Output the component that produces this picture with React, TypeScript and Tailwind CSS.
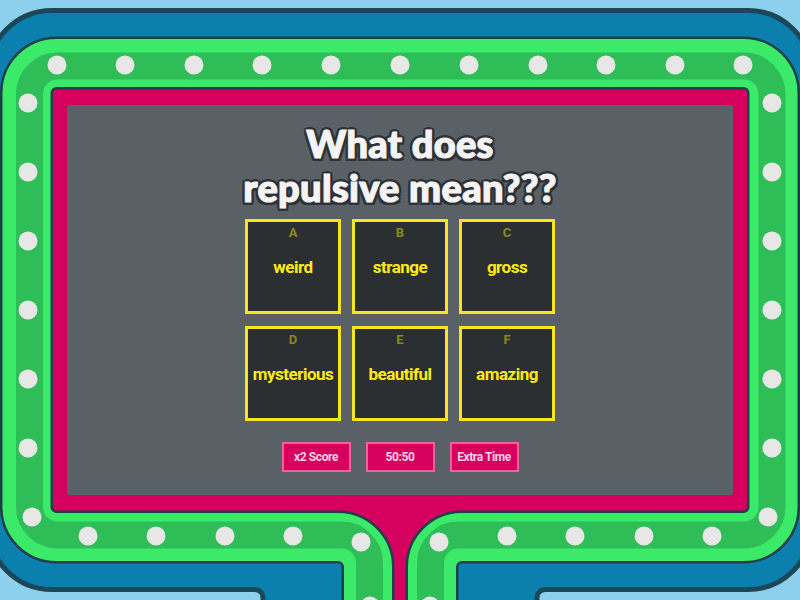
import React from "react";

const answers = [
  { key: "A", text: "weird" },
  { key: "B", text: "strange" },
  { key: "C", text: "gross" },
  { key: "D", text: "mysterious" },
  { key: "E", text: "beautiful" },
  { key: "F", text: "amazing" },
];

const powerUps = ["x2 Score", "50:50", "Extra Time"];

// centre line of a band that runs round the screen and turns down on both sides of the stem
function band(l: number, t: number, r: number, b: number, sl: number, sr: number, rad: number) {
  return `M ${sl} 640 V ${b + rad} A ${rad} ${rad} 0 0 0 ${sl - rad} ${b} H ${l + rad} A ${rad} ${rad} 0 0 1 ${l} ${b - rad} V ${t + rad} A ${rad} ${rad} 0 0 1 ${l + rad} ${t} H ${r - rad} A ${rad} ${rad} 0 0 1 ${r} ${t + rad} V ${b - rad} A ${rad} ${rad} 0 0 1 ${r - rad} ${b} H ${sr + rad} A ${rad} ${rad} 0 0 0 ${sr} ${b + rad} V 640`;
}

const bulbs: [number, number][] = [
  ...[57, 125, 194, 262, 331, 400, 469, 538, 606, 675, 743].map((x) => [x, 65] as [number, number]),
  ...[103, 172, 241, 310, 379, 448].map((y) => [28, y] as [number, number]),
  ...[103, 172, 241, 310, 379, 448].map((y) => [772, y] as [number, number]),
  [32, 517],
  [768, 517],
  ...[88, 156, 225, 293].map((x) => [x, 536] as [number, number]),
  ...[507, 575, 644, 712].map((x) => [x, 536] as [number, number]),
  [361, 542],
  [439, 542],
  [370, 606],
  [430, 606],
];

function StageFrame() {
  return (
    <svg className="absolute inset-0" width="800" height="600" viewBox="0 0 800 600" aria-hidden="true">
      <path
        d="M -12 74 A 64 64 0 0 1 52 10.5 H 748 A 64 64 0 0 1 812 74 V 526 A 64 64 0 0 1 748 589.5 H 545 A 8 8 0 0 0 537 597.5 V 640 H 263 V 597.5 A 8 8 0 0 0 255 589.5 H 52 A 64 64 0 0 1 -12 526 Z"
        fill="#0b7fad"
        stroke="#1c4759"
        strokeWidth="5"
      />
      <path d="M 40 80 H 760 V 530 H 420 V 640 H 380 V 530 H 40 Z" fill="#d6005f" />
      <path d={band(26.5, 63, 773.5, 537, 368, 432, 30)} fill="none" stroke="#1f3f4a" strokeWidth="53" />
      <path d={band(26.5, 63, 773.5, 537, 368, 432, 30)} fill="none" stroke="#3cea6a" strokeWidth="48" />
      <path d={band(29.5, 66, 772, 535, 369.5, 430.5, 28)} fill="none" stroke="#2fbd57" strokeWidth="27" />
      {bulbs.map(([x, y], i) => (
        <circle key={i} cx={x} cy={y} r="9.5" fill="#e7e7e5" />
      ))}
    </svg>
  );
}

export default function App() {
  return (
    <div className="relative w-[800px] h-[600px] overflow-hidden bg-[#8dd0ee] pt-[90px] pl-[53px]">
      <StageFrame />
      <div className="relative w-[694px] h-[419px] rounded-[10px] bg-[#d6005f] px-[14px] pt-[15px] pb-[14px]">
        <div className="h-full rounded-[2px] bg-[#596166] flex flex-col items-center pt-[16px]">
          <h1 className="text-center text-[38px] leading-[44px] font-black tracking-[0.3px] text-[#f4f4f4] [font-family:Lato,sans-serif] [-webkit-text-stroke:1.2px_#f4f4f4] [text-shadow:2.5px_2.5px_0_#2e3236,-2.5px_-2.5px_0_#2e3236,2.5px_-2.5px_0_#2e3236,-2.5px_2.5px_0_#2e3236,0_3px_0_#2e3236,0_-3px_0_#2e3236,3px_0_0_#2e3236,-3px_0_0_#2e3236]">
            What does
            <br />
            repulsive mean???
          </h1>

          <div className="mt-[10px] grid grid-cols-[96px_96px_96px] gap-x-[11px] gap-y-[12px] [font-family:Roboto,sans-serif]">
            {answers.map((a) => (
              <div key={a.key} className="h-[95px] border-[3px] border-[#f7e520] bg-[#2b2f31] flex flex-col items-center pt-[3px]">
                <span className="text-[13px] leading-[16px] font-bold text-[#8c891c]">{a.key}</span>
                <span className="mt-[15px] text-[17px] leading-[22px] font-bold tracking-[-0.5px] text-[#ffeb14] whitespace-nowrap">
                  {a.text}
                </span>
              </div>
            ))}
          </div>

          <div className="mt-[21px] flex gap-[15px] [font-family:Roboto,sans-serif]">
            {powerUps.map((p) => (
              <button
                key={p}
                className="w-[69px] h-[30px] border-2 border-[#f0609c] bg-[#d6005f] text-[12px] font-bold tracking-[-0.4px] whitespace-nowrap text-[#ffd2e4] flex items-center justify-center"
              >
                {p}
              </button>
            ))}
          </div>
        </div>
      </div>
    </div>
  );
}
